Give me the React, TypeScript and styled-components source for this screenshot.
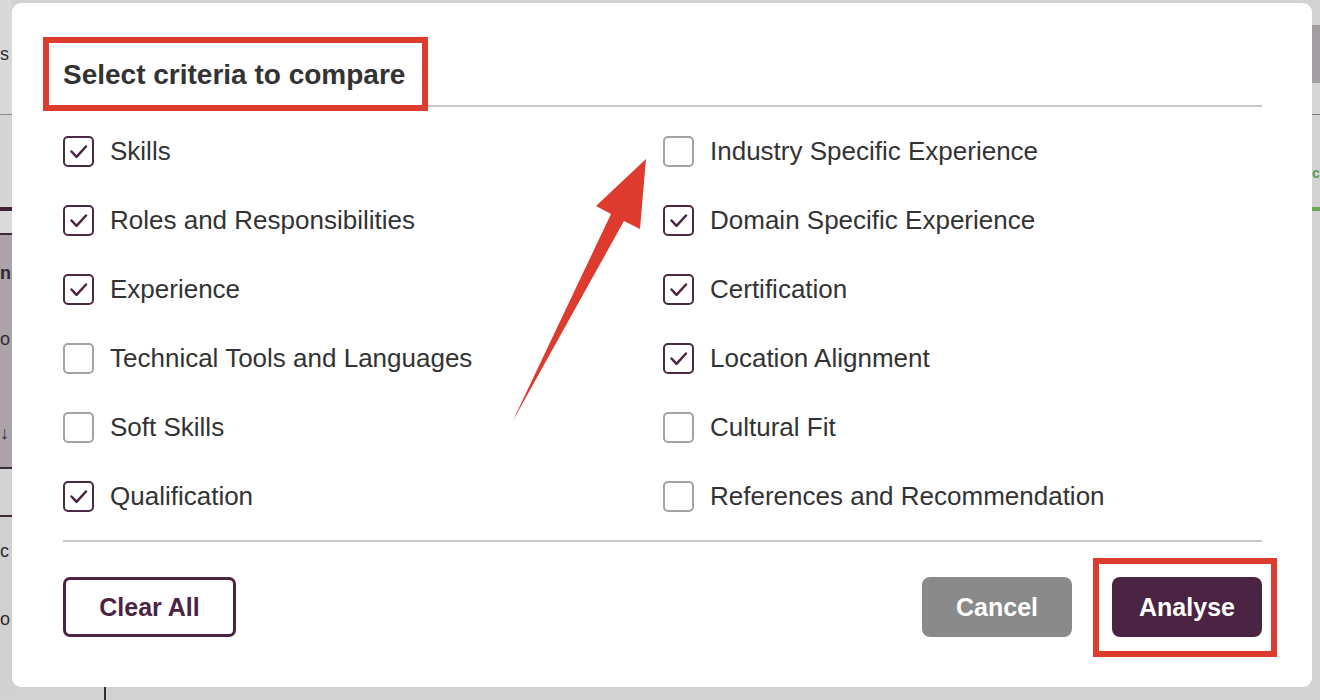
import styled, { createGlobalStyle } from "styled-components";

const GlobalStyle = createGlobalStyle`
  html, body {
    margin: 0;
    padding: 0;
    background: #d2d2d2;
  }
  body {
    font-family: "Liberation Sans", Arial, Helvetica, sans-serif;
    color: #333333;
  }
  * {
    box-sizing: border-box;
  }
`;

const colors = {
  purple: "#4b2443",
  checkBorder: "#4a2a44",
  grayBorder: "#a3a3a3",
  text: "#333333",
  divider: "#c9c9c9",
  cancel: "#8a8a8a",
  annotation: "#dc3b2e",
};

const leftCriteria = [
  { label: "Skills", checked: true },
  { label: "Roles and Responsibilities", checked: true },
  { label: "Experience", checked: true },
  { label: "Technical Tools and Languages", checked: false },
  { label: "Soft Skills", checked: false },
  { label: "Qualification", checked: true },
];

const rightCriteria = [
  { label: "Industry Specific Experience", checked: false },
  { label: "Domain Specific Experience", checked: true },
  { label: "Certification", checked: true },
  { label: "Location Alignment", checked: true },
  { label: "Cultural Fit", checked: false },
  { label: "References and Recommendation", checked: false },
];

// rows are laid out row by row, left item then right item
const criteria = leftCriteria.flatMap((item, i) => [item, rightCriteria[i]]);

const CheckMark = () => (
  <svg width="31" height="31" viewBox="0 0 31 31">
    <polyline
      points="8.5,15.5 13.5,20.8 23,10.5"
      fill="none"
      stroke={colors.purple}
      strokeWidth="2.5"
      strokeLinecap="round"
      strokeLinejoin="round"
    />
  </svg>
);

const App = () => {
  return (
    <>
      <GlobalStyle />
      <Page>
        <Backdrop>
          <LeftSliver>
            <Segment $h={115} $bg="#d9d9d9" $line="1px solid #8c8c8c">
              <SliverText $top={44}>s</SliverText>
            </Segment>
            <Segment $h={92} $bg="#d5d5d5" />
            <Segment $h={4} $bg="#3e2336" />
            <Segment $h={24} $bg="#dadada" $line="2px solid #3a2c36" />
            <Segment $h={234} $bg="#aba3a9" $line="2px solid #3a2c36">
              <SliverText $top={28} $bold>n</SliverText>
              <SliverText $top={46}>o</SliverText>
              <SliverText $top={74}>↓</SliverText>
            </Segment>
            <Segment $h={48} $bg="#d3d3d3" $line="2px solid #3a2c36" />
            <Segment $h={178} $bg="#d1d1d1">
              <SliverText $top={24}>c</SliverText>
              <SliverText $top={48}>o</SliverText>
            </Segment>
          </LeftSliver>

          <Modal>
            <Header>
              <Title>Select criteria to compare</Title>
            </Header>

            <CriteriaGrid>
              {criteria.map((item) => (
                <CriteriaItem key={item.label}>
                  <CheckBox $checked={item.checked}>
                    {item.checked && <CheckMark />}
                  </CheckBox>
                  <Label>{item.label}</Label>
                </CriteriaItem>
              ))}
            </CriteriaGrid>

            <Footer>
              <ClearButton>Clear All</ClearButton>
              <Actions>
                <CancelButton>Cancel</CancelButton>
                <AnalyseButton>Analyse</AnalyseButton>
              </Actions>
            </Footer>

            {/* annotations drawn over the dialog */}
            <TitleHighlight />
            <AnalyseHighlight />
            <ArrowLayer viewBox="0 0 1300 684" width="1300" height="684">
              <polygon
                points="500.5,418.5 599,211 584,203 634,156 628,226 612,218"
                fill={colors.annotation}
              />
            </ArrowLayer>
          </Modal>

          <RightSliver>
            <Segment $h={25} $bg="#d3d3d3" />
            <Segment $h={58} $bg="#a39ea1" />
            <Segment $h={32} $bg="#d6d6d6" $line="1px solid #7a7a7a" />
            <Segment $h={92} $bg="#d3d3d3">
              <GreenText>c</GreenText>
            </Segment>
            <Segment $h={4} $bg="#6aa55a" />
            <Segment $h={494} $bg="#d2d2d2" />
          </RightSliver>
        </Backdrop>
        <BottomStrip>
          <BottomRule />
        </BottomStrip>
      </Page>
    </>
  );
};

export default App;

const Page = styled.div`
  display: flex;
  flex-direction: column;
  width: 1320px;
  height: 700px;
  overflow: hidden;
  background: #d2d2d2;
`;

const Backdrop = styled.div`
  display: flex;
  align-items: flex-start;
  height: 687px;
`;

const LeftSliver = styled.div`
  display: flex;
  flex-direction: column;
  width: 12px;
  flex-shrink: 0;
  overflow: hidden;
`;

const RightSliver = styled.div`
  display: flex;
  flex-direction: column;
  width: 8px;
  flex-shrink: 0;
  overflow: hidden;
`;

const Segment = styled.div<{ $h: number; $bg: string; $line?: string }>`
  display: flex;
  flex-direction: column;
  align-items: flex-start;
  height: ${(p) => p.$h}px;
  flex-shrink: 0;
  background: ${(p) => p.$bg};
  border-bottom: ${(p) => p.$line || "none"};
`;

const SliverText = styled.span<{ $top: number; $bold?: boolean }>`
  margin-top: ${(p) => p.$top}px;
  margin-left: 0;
  font-size: 18px;
  line-height: 20px;
  font-weight: ${(p) => (p.$bold ? 700 : 400)};
  color: #2f2a2e;
  white-space: nowrap;
`;

const GreenText = styled.span`
  margin-top: 50px;
  margin-left: 0;
  font-size: 14px;
  line-height: 16px;
  font-weight: 700;
  color: #5f9c4f;
`;

const Modal = styled.div`
  position: relative;
  display: flex;
  flex-direction: column;
  width: 1300px;
  height: 684px;
  margin-top: 3px;
  flex-shrink: 0;
  padding: 0 50px 0 51px;
  background: #ffffff;
  border-radius: 9px;
`;

const Header = styled.div`
  padding-top: 56px;
  padding-bottom: 14px;
  border-bottom: 2px solid ${colors.divider};
`;

const Title = styled.h2`
  margin: 0;
  font-size: 28px;
  line-height: 32px;
  font-weight: 700;
  color: ${colors.text};
`;

const CriteriaGrid = styled.div`
  display: grid;
  grid-template-columns: 600px 1fr;
  grid-auto-rows: 69px;
  padding-top: 10px;
  padding-bottom: 9px;
  border-bottom: 2px solid ${colors.divider};
`;

const CriteriaItem = styled.label`
  display: flex;
  align-items: center;
  gap: 16px;
  cursor: pointer;
`;

const CheckBox = styled.span<{ $checked: boolean }>`
  display: flex;
  width: 31px;
  height: 31px;
  flex-shrink: 0;
  border: 2px solid
    ${(p) => (p.$checked ? colors.checkBorder : colors.grayBorder)};
  border-radius: 5px;
  background: #ffffff;

  svg {
    margin: -2px;
  }
`;

const Label = styled.span`
  font-size: 26px;
  line-height: 30px;
  color: ${colors.text};
  margin-top: -2px;
`;

const Footer = styled.div`
  display: flex;
  align-items: center;
  justify-content: space-between;
  padding-top: 35px;
`;

const Actions = styled.div`
  display: flex;
  gap: 40px;
`;

const BaseButton = styled.button`
  height: 60px;
  font-family: "Liberation Sans", Arial, Helvetica, sans-serif;
  font-size: 25px;
  font-weight: 700;
  border-radius: 8px;
  cursor: pointer;
`;

const ClearButton = styled(BaseButton)`
  width: 173px;
  background: #ffffff;
  color: ${colors.purple};
  border: 3px solid ${colors.purple};
  border-radius: 7px;
`;

const CancelButton = styled(BaseButton)`
  width: 150px;
  background: ${colors.cancel};
  color: #ffffff;
  border: none;
`;

const AnalyseButton = styled(BaseButton)`
  width: 150px;
  background: ${colors.purple};
  color: #ffffff;
  border: none;
`;

const TitleHighlight = styled.div`
  position: absolute;
  left: 31px;
  top: 34px;
  width: 385px;
  height: 74px;
  border: 6px solid ${colors.annotation};
  pointer-events: none;
`;

const AnalyseHighlight = styled.div`
  position: absolute;
  left: 1081px;
  top: 555px;
  width: 184px;
  height: 99px;
  border: 6px solid ${colors.annotation};
  pointer-events: none;
`;

const ArrowLayer = styled.svg`
  position: absolute;
  left: 0;
  top: 0;
  pointer-events: none;
`;

const BottomStrip = styled.div`
  display: flex;
  height: 13px;
  padding-left: 104px;
`;

const BottomRule = styled.div`
  width: 2px;
  height: 100%;
  background: #3a2c36;
`;
